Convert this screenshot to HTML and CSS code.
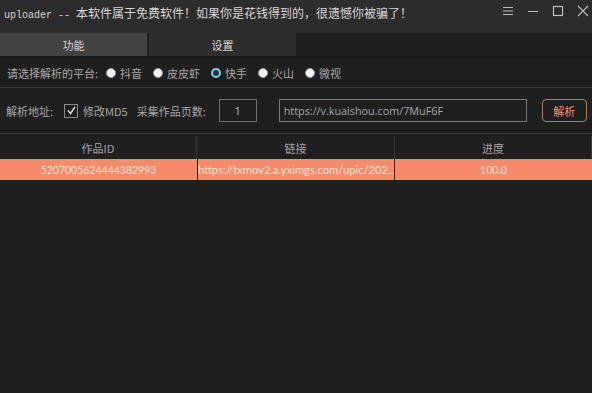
FILE: index.html
```html
<!DOCTYPE html>
<html lang="zh">
<head>
<meta charset="utf-8">
<title>uploader</title>
<link rel="stylesheet" href="styles.css">
</head>
<body>
<div class="app">
  <div class="titlebar">
    <div class="title"><span class="mono">uploader -- </span>本软件属于免费软件！如果你是花钱得到的，很遗憾你被骗了！</div>
    <div class="controls">
      <svg class="ctl" width="12" height="12" viewBox="0 0 12 12"><path d="M1 2.5h10M1 6h10M1 9.5h10" stroke="#bdbdbd" stroke-width="1"/></svg>
      <svg class="ctl" width="12" height="12" viewBox="0 0 12 12"><path d="M1 6.5h10" stroke="#bdbdbd" stroke-width="1"/></svg>
      <svg class="ctl" width="12" height="12" viewBox="0 0 12 12"><rect x="1.5" y="1.5" width="9" height="9" fill="none" stroke="#bdbdbd" stroke-width="1.2"/></svg>
      <svg class="ctl" width="12" height="12" viewBox="0 0 12 12"><path d="M1 1l10 10M11 1L1 11" stroke="#bdbdbd" stroke-width="1.1"/></svg>
    </div>
  </div>
  <div class="tabs">
    <div class="tab active">功能</div>
    <div class="tab">设置</div>
  </div>
  <div class="strip"></div>
  <div class="row platform">
    <span class="label">请选择解析的平台:</span>
    <div class="radios">
      <label class="radio"><span class="dot"></span>抖音</label>
      <label class="radio"><span class="dot"></span>皮皮虾</label>
      <label class="radio"><span class="dot on"></span>快手</label>
      <label class="radio"><span class="dot"></span>火山</label>
      <label class="radio"><span class="dot"></span>微视</label>
    </div>
  </div>
  <div class="row params">
    <span class="label">解析地址:</span>
    <label class="check"><span class="box"><svg width="11" height="11" viewBox="0 0 11 11"><path d="M2 5.5l2.5 3L9 1.8" fill="none" stroke="#e0e0e0" stroke-width="1.4"/></svg></span>修改MD5</label>
    <span class="label pages">采集作品页数:</span>
    <div class="num">1</div>
    <div class="url">https://v.kuaishou.com/7MuF6F</div>
    <div class="btn">解析</div>
  </div>
  <div class="grid">
    <div class="head">作品ID</div>
    <div class="head">链接</div>
    <div class="head">进度</div>
    <div class="cell center">5207005624444382993</div>
    <div class="cell link">https://txmov2.a.yximgs.com/upic/202...</div>
    <div class="cell center">100.0</div>
  </div>
</div>
</body>
</html>
```
FILE: styles.css
```css
html, body {
  margin: 0;
  padding: 0;
  background: #1f1f1f;
}
body {
  width: 592px;
  height: 393px;
  overflow: hidden;
  font-family: "Noto Sans CJK SC", "Noto Sans", sans-serif;
  color: #b8b8b8;
  font-size: 11px;
}
.app {
  display: flex;
  flex-direction: column;
}
.titlebar {
  height: 33px;
  background: #2c2c2c;
  display: flex;
  align-items: flex-start;
  justify-content: space-between;
}
.title {
  padding: 5px 0 0 4px;
  font-size: 12px;
  line-height: 16px;
  color: #d6d6d6;
  white-space: nowrap;
}
.mono {
  font-family: "Liberation Mono", "DejaVu Sans Mono", monospace;
  font-size: 10px;
}
.controls {
  display: flex;
  gap: 13px;
  padding: 5px 3px 0 0;
}
.ctl { display: block; }
.tabs {
  display: flex;
  height: 23px;
  background: #1f1f1f;
}
.tab {
  width: 147px;
  margin-right: 2px;
  background: #2e2e2e;
  color: #d4d4d4;
  display: flex;
  align-items: center;
  justify-content: center;
  font-size: 11px;
}
.tab.active {
  background: #424242;
}
.strip {
  height: 2px;
  background: #181818;
}
.row {
  display: flex;
  align-items: center;
  border-bottom: 1px solid #3b3b3b;
}
.platform {
  height: 29px;
  padding-left: 7px;
}
.label {
  color: #a8a8a8;
  white-space: nowrap;
}
.radios {
  display: flex;
  gap: 11px;
  margin-left: 8px;
}
.radio {
  display: flex;
  align-items: center;
  gap: 4px;
  color: #a8a8a8;
}
.dot {
  width: 8px;
  height: 8px;
  border-radius: 50%;
  background: #f2f2f2;
  border: 1px solid #9a9a9a;
}
.dot.on {
  background: #263340;
  border: 2px solid #8ccbeb;
  width: 6px;
  height: 6px;
}
.params {
  height: 45px;
  padding-left: 6px;
}
.check {
  display: flex;
  align-items: center;
  gap: 5px;
  margin-left: 11px;
  color: #a8a8a8;
}
.box {
  width: 12px;
  height: 12px;
  border: 1px solid #8a8a8a;
  display: flex;
  align-items: center;
  justify-content: center;
}
.pages {
  margin-left: 9px;
}
.num {
  margin-left: 13px;
  width: 36px;
  height: 21px;
  border: 1px solid #707070;
  display: flex;
  align-items: center;
  justify-content: center;
  color: #bcbcbc;
  font-family: "Open Sans", sans-serif;
}
.url {
  margin-left: 22px;
  width: 242px;
  height: 21px;
  border: 1px solid #7a7a7a;
  display: flex;
  align-items: center;
  padding-left: 4px;
  color: #a8a8a8;
  font-family: "Open Sans", sans-serif;
  font-size: 10.8px;
}
.btn {
  margin-left: 15px;
  width: 43px;
  height: 21px;
  border: 1px solid #c27658;
  border-radius: 4px;
  display: flex;
  align-items: center;
  justify-content: center;
  color: #ee9474;
}
.grid {
  display: grid;
  grid-template-columns: 197px 198px 197px;
  margin-top: 2px;
}
.head {
  height: 23px;
  display: flex;
  align-items: center;
  justify-content: center;
  color: #a6a6a6;
  border-right: 1px solid #383838;
}
.head:last-child { border-right: none; }
.cell {
  height: 21px;
  background: #f58b6b;
  color: #fbe0d6;
  display: flex;
  align-items: center;
  font-family: "Lato", sans-serif;
  font-size: 10.5px;
  overflow: hidden;
  white-space: nowrap;
}
.cell.center {
  justify-content: center;
}
.cell.link {
  font-size: 11.2px;
  border-left: 1px solid #3a2420;
  border-right: 1px solid #3a2420;
}
```
